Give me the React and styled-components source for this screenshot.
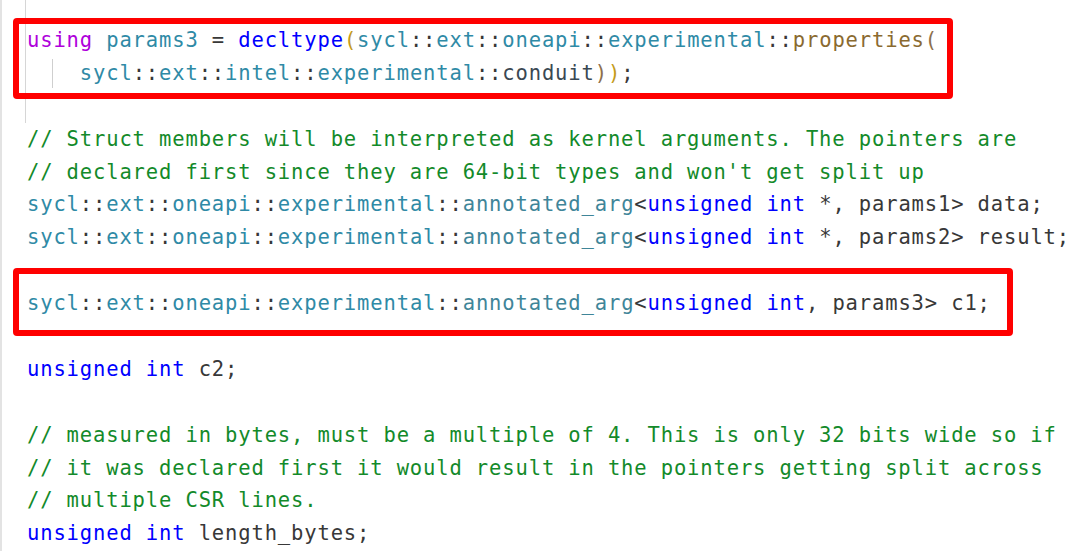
import styled, { createGlobalStyle } from "styled-components";

const GlobalStyle = createGlobalStyle`
  html, body {
    margin: 0;
    padding: 0;
    background: #ffffff;
  }
  body {
    width: 1080px;
    height: 551px;
    overflow: hidden;
  }
`;

const colors = {
  plain: "#383838",
  kw: "#0000ff",
  kwAlt: "#af00db",
  ns: "#2f8aa6",
  tpl: "#3f8599",
  fn: "#8a6a30",
  com: "#138a2a",
  gold: "#c49b1a",
  paren: "#8c6f4c",
  ident: "#3a4853",
};

const Editor = styled.div`
  position: relative;
  box-sizing: border-box;
  width: 1080px;
  height: 551px;
  padding: 24px 0 0 25px;
  border-left: 2px solid #e3e3e3;
  font-family: "DejaVu Sans Mono", "Liberation Mono", monospace;
  font-size: 20.5px;
  letter-spacing: 0.86px;
  line-height: 32.9px;
  color: ${colors.plain};
  white-space: pre;
`;

const ScopeGuide = styled.div`
  position: absolute;
  left: 23px;
  top: 0;
  width: 1px;
  height: 123px;
  background: #d6d6d6;
`;

const Line = styled.div`
  position: relative;
  height: 32.9px;
`;

const IndentGuide = styled.span`
  position: absolute;
  left: 25px;
  top: 2px;
  bottom: 2px;
  width: 1px;
  background: #cfcfcf;
`;

const Tok = styled.span`
  color: ${(p) => colors[p.$t] || colors.plain};
`;

const Mark = styled.div`
  position: relative;

  &::after {
    content: "";
    position: absolute;
    left: -14px;
    top: ${(p) => p.$top}px;
    bottom: ${(p) => p.$bottom}px;
    width: ${(p) => p.$width}px;
    box-sizing: border-box;
    border: 6px solid #ff0000;
    border-radius: 4px;
    pointer-events: none;
  }
`;

const ns = (parts) =>
  parts.flatMap((p) => [
    ["ns", p],
    ["plain", "::"],
  ]);

const annotated = [
  ...ns(["sycl", "ext", "oneapi", "experimental"]),
  ["tpl", "annotated_arg"],
  ["plain", "<"],
];

const lines = {
  using: [
    ["kwAlt", "using"],
    ["plain", " "],
    ["ns", "params3"],
    ["plain", " = "],
    ["kw", "decltype"],
    ["gold", "("],
    ...ns(["sycl", "ext", "oneapi", "experimental"]),
    ["fn", "properties"],
    ["paren", "("],
  ],
  conduit: [
    ["plain", "    "],
    ...ns(["sycl", "ext", "intel", "experimental"]),
    ["ident", "conduit"],
    ["paren", ")"],
    ["gold", ")"],
    ["plain", ";"],
  ],
  c1: [
    ...annotated,
    ["kw", "unsigned"],
    ["plain", " "],
    ["kw", "int"],
    ["plain", ", params3> c1;"],
  ],
};

const comment = (text) => [["com", text]];

const Code = ({ tokens, guide }) => (
  <Line>
    {guide && <IndentGuide />}
    {tokens.length === 0
      ? " "
      : tokens.map(([t, text], i) => (
          <Tok key={i} $t={t}>
            {text}
          </Tok>
        ))}
  </Line>
);

const ptrArg = (name) => [
  ...annotated,
  ["kw", "unsigned"],
  ["plain", " "],
  ["kw", "int"],
  ["plain", ` *, ${name}`],
];

export default function App() {
  return (
    <>
      <GlobalStyle />
      <Editor>
        <ScopeGuide />
        <Mark $top={-6} $bottom={-9} $width={940}>
          <Code tokens={lines.using} />
          <Code tokens={lines.conduit} guide />
        </Mark>
        <Code tokens={[]} />
        <Code
          tokens={comment(
            "// Struct members will be interpreted as kernel arguments. The pointers are"
          )}
        />
        <Code
          tokens={comment(
            "// declared first since they are 64-bit types and won't get split up"
          )}
        />
        <Code tokens={ptrArg("params1> data;")} />
        <Code tokens={ptrArg("params2> result;")} />
        <Code tokens={[]} />
        <Mark $top={-19} $bottom={-16} $width={1000}>
          <Code tokens={lines.c1} />
        </Mark>
        <Code tokens={[]} />
        <Code
          tokens={[
            ["kw", "unsigned"],
            ["plain", " "],
            ["kw", "int"],
            ["plain", " c2;"],
          ]}
        />
        <Code tokens={[]} />
        <Code
          tokens={comment(
            "// measured in bytes, must be a multiple of 4. This is only 32 bits wide so if"
          )}
        />
        <Code
          tokens={comment(
            "// it was declared first it would result in the pointers getting split across"
          )}
        />
        <Code tokens={comment("// multiple CSR lines.")} />
        <Code
          tokens={[
            ["kw", "unsigned"],
            ["plain", " "],
            ["kw", "int"],
            ["plain", " length_bytes;"],
          ]}
        />
      </Editor>
    </>
  );
}
